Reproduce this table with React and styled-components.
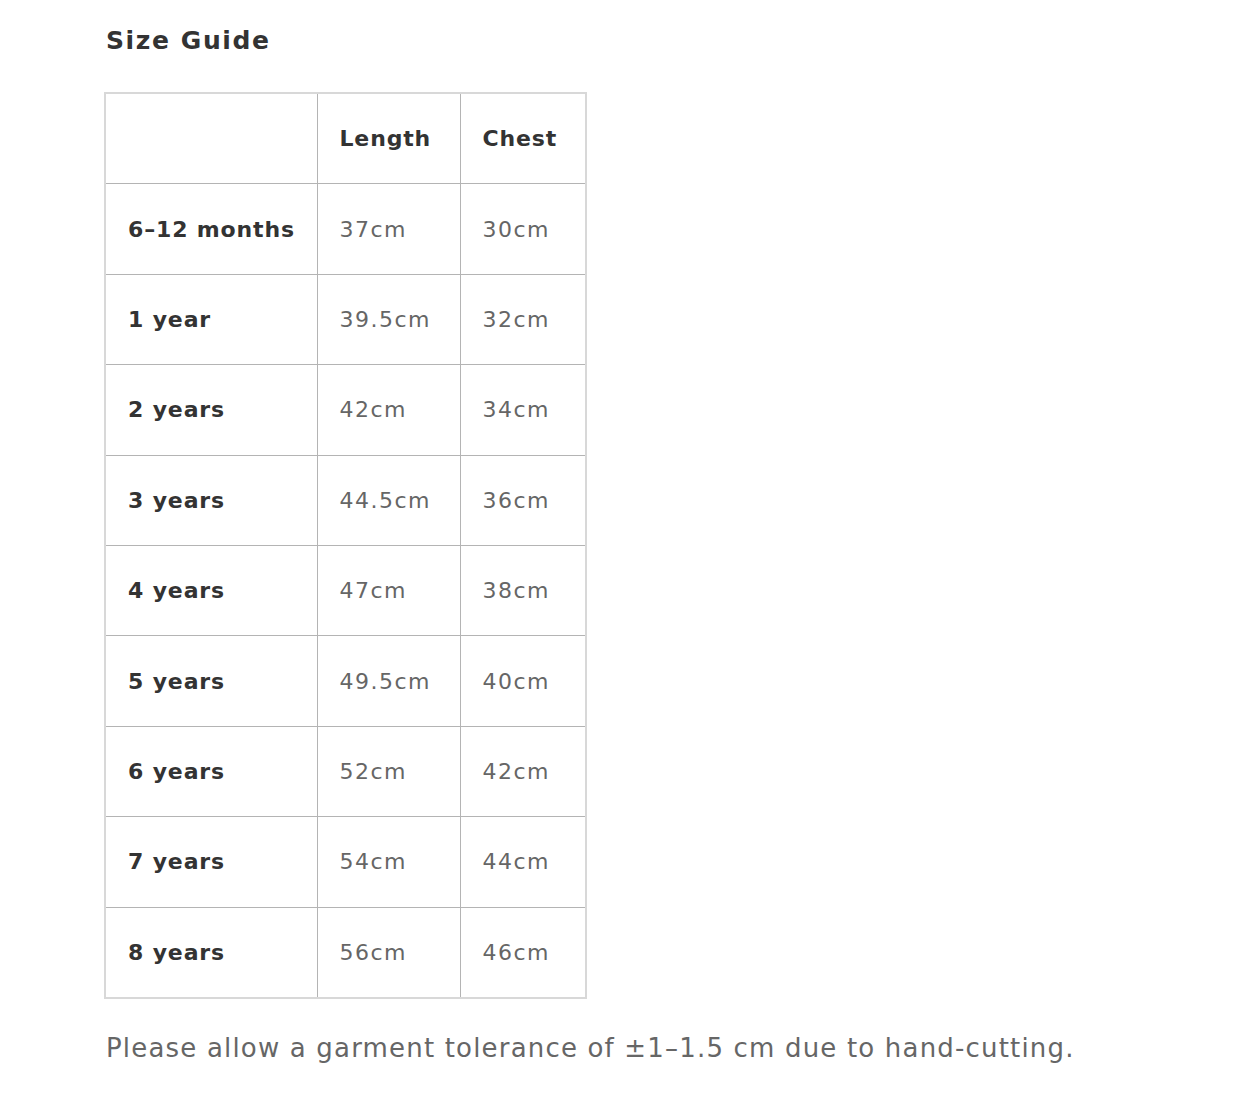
import React from "react";
import styled, { createGlobalStyle } from "styled-components";

const Global = createGlobalStyle`
  body {
    margin: 0;
    background: #fff;
    font-family: "DejaVu Sans", "Liberation Sans", sans-serif;
  }
`;

const Page = styled.div`
  padding: 25px 0 40px 106px;
`;

const Title = styled.h2`
  margin: 0 0 35px;
  font-size: 25px;
  font-weight: 700;
  letter-spacing: 1.6px;
  color: #333;
  line-height: 32px;
`;

const Table = styled.table`
  border-collapse: collapse;
  table-layout: fixed;
  width: 481px;
  margin-left: -2px;
  border: 2px solid #d8d8d8;
`;

const Cell = styled.td`
  height: 89.4px;
  padding: 0 0 0 22px;
  border: 1px solid #b4b4b4;
  font-size: 22px;
  letter-spacing: ${(p) => (p.$bold ? "0.85px" : "1.5px")};
  vertical-align: middle;
  text-align: left;
  font-weight: ${(p) => (p.$bold ? 700 : 400)};
  color: ${(p) => (p.$bold ? "#333" : "#666")};
`;

const Note = styled.p`
  margin: 34px 0 0;
  font-size: 26px;
  letter-spacing: 1.18px;
  color: #666;
`;

const rows = [
  ["6–12 months", "37cm", "30cm"],
  ["1 year", "39.5cm", "32cm"],
  ["2 years", "42cm", "34cm"],
  ["3 years", "44.5cm", "36cm"],
  ["4 years", "47cm", "38cm"],
  ["5 years", "49.5cm", "40cm"],
  ["6 years", "52cm", "42cm"],
  ["7 years", "54cm", "44cm"],
  ["8 years", "56cm", "46cm"],
];

export default function App() {
  return (
    <Page>
      <Global />
      <Title>Size Guide</Title>
      <Table>
        <colgroup>
          <col style={{ width: 212 }} />
          <col style={{ width: 143 }} />
          <col style={{ width: 126 }} />
        </colgroup>
        <thead>
          <tr>
            <Cell as="th" />
            <Cell as="th" $bold>Length</Cell>
            <Cell as="th" $bold>Chest</Cell>
          </tr>
        </thead>
        <tbody>
          {rows.map((r) => (
            <tr key={r[0]}>
              <Cell $bold>{r[0]}</Cell>
              <Cell>{r[1]}</Cell>
              <Cell>{r[2]}</Cell>
            </tr>
          ))}
        </tbody>
      </Table>
      <Note>Please allow a garment tolerance of ±1–1.5 cm due to hand-cutting.</Note>
    </Page>
  );
}
